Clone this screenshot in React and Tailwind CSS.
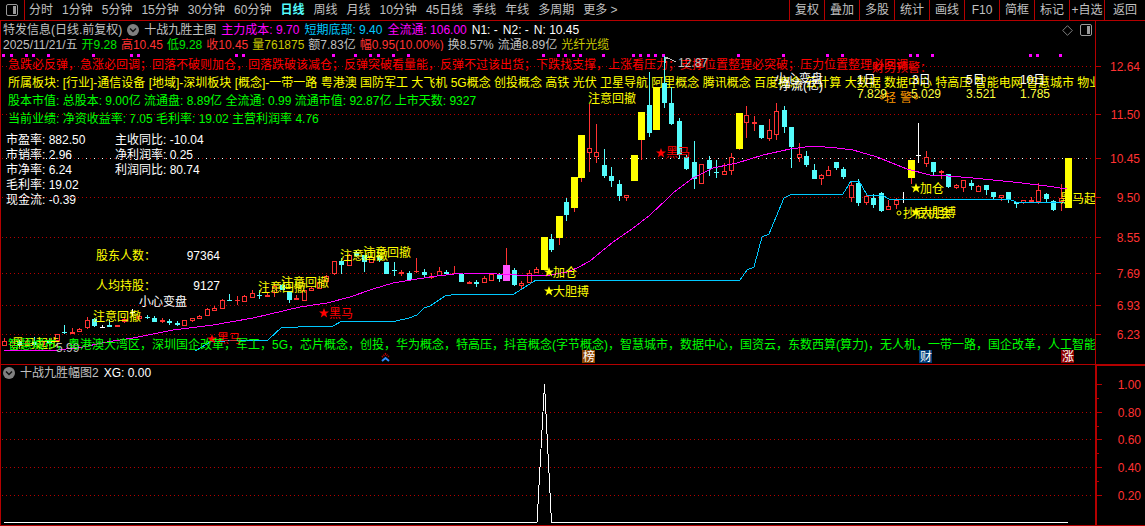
// src/App.jsx
import React, { useState } from 'react';

const periods = [
  '分时', '1分钟', '5分钟', '15分钟', '30分钟', '60分钟', '日线', '周线', '月线',
  '10分钟', '45日线', '季线', '年线', '多周期', '更多 >'
];

const actions = ['复权', '叠加', '多股', '统计', '画线', 'F10', '简框', '标记', '+自选', '返回'];

const quote = [
  { text: '2025/11/21/五', color: 'text-[#c0c0c0]' },
  { text: '开9.28', color: 'text-[#00e600]' },
  { text: '高10.45', color: 'text-[#ff3232]' },
  { text: '低9.28', color: 'text-[#00e600]' },
  { text: '收10.45', color: 'text-[#ff3232]' },
  { text: '量761875', color: 'text-[#c8c800]' },
  { text: '额7.83亿', color: 'text-[#c0c0c0]' },
  { text: '幅0.95(10.00%)', color: 'text-[#ff3232]' },
  { text: '换8.57%', color: 'text-[#c0c0c0]' },
  { text: '流通8.89亿', color: 'text-[#c0c0c0]' },
  { text: '光纤光缆', color: 'text-[#c8c800]' }
];

const indicators = [
  { text: '主力成本: 9.70', color: 'text-[#ff00ff]' },
  { text: '短期底部: 9.40', color: 'text-[#00c8ff]' },
  { text: '全流通: 106.00', color: 'text-[#ff00ff]' },
  { text: 'N1: -', color: 'text-white' },
  { text: 'N2: -', color: 'text-white' },
  { text: 'N: 10.45', color: 'text-white' }
];

const stats = [
  ['市盈率: 882.50', '主收同比: -10.04'],
  ['市销率: 2.96', '净利润率: 0.25'],
  ['市净率: 6.24', '利润同比: 80.74'],
  ['毛利率: 19.02', ''],
  ['现金流: -0.39', '']
];

const priceLevels = [
  [66, '12.64'], [114, '11.50'], [158, '10.45'], [197, '9.50'],
  [237, '8.55'], [273, '7.69'], [305, '6.93'], [334, '6.23']
];

const subLevels = [
  [384, '1.00'], [412, '0.80'], [439, '0.60'], [467, '0.40'], [495, '0.20']
];
const subTicks = [398, 426, 453, 481];

const signalDots = [
  2, 10, 25, 32, 47, 92, 130, 137, 235, 242, 332, 354, 369, 377, 392, 407, 542, 557,
  564, 572, 579, 602, 632, 639, 647, 654, 662, 737, 782, 826, 841, 909, 916, 931,
  1029, 1036, 1059
];

// [x, kind, high, low, body top, body bottom]
// kinds: r - up (hollow), c - down, y - limit up, m - marked, w - flat
const candles = [
  [4, 'r', 338, 346, 341, 346], [12, 'r', 340, 347, 342, 346], [19, 'c', 340, 347, 341, 345],
  [27, 'r', 339, 346, 341, 345], [34, 'c', 337, 346, 342, 345], [42, 'r', 340, 347, 341, 345],
  [49, 'c', 338, 345, 340, 343], [57, 'r', 334, 342, 334, 341], [64, 'c', 325, 334, 332, 333],
  [72, 'r', 328, 334, 332, 334], [79, 'r', 328, 332, 329, 332], [87, 'r', 317, 329, 320, 328],
  [94, 'c', 318, 327, 319, 326], [102, 'w', 325, 328, 327, 328], [109, 'c', 320, 327, 325, 327],
  [117, 'r', 325, 327, 325, 327], [124, 'r', 317, 323, 319, 322], [132, 'w', 309, 316, 312, 313],
  [139, 'r', 315, 319, 316, 319], [147, 'c', 315, 319, 317, 318], [154, 'c', 316, 322, 318, 322],
  [162, 'r', 318, 323, 320, 322], [169, 'c', 319, 325, 321, 323], [177, 'c', 321, 326, 323, 325],
  [184, 'r', 320, 326, 320, 326], [192, 'r', 318, 322, 318, 321], [199, 'r', 315, 319, 316, 319],
  [207, 'r', 308, 316, 309, 316], [214, 'r', 306, 311, 308, 311], [222, 'r', 299, 309, 300, 309],
  [229, 'c', 294, 301, 300, 301], [237, 'r', 296, 305, 300, 301], [244, 'r', 295, 302, 296, 302],
  [252, 'r', 290, 298, 293, 298], [259, 'c', 290, 299, 295, 296], [267, 'r', 293, 297, 295, 297],
  [274, 'r', 283, 297, 286, 293], [282, 'c', 284, 290, 285, 290], [289, 'c', 291, 303, 291, 300],
  [296, 'r', 295, 300, 298, 300], [304, 'r', 290, 301, 290, 301], [311, 'r', 287, 291, 288, 291],
  [319, 'r', 281, 289, 282, 289], [326, 'r', 275, 282, 276, 282], [334, 'r', 261, 275, 261, 274],
  [341, 'c', 258, 274, 261, 265], [349, 'r', 254, 266, 255, 266], [356, 'c', 251, 257, 252, 256],
  [364, 'c', 255, 272, 255, 262], [371, 'r', 256, 263, 257, 263], [379, 'c', 255, 262, 256, 260],
  [386, 'c', 262, 274, 262, 274], [394, 'c', 262, 276, 270, 271], [401, 'r', 270, 276, 272, 274],
  [409, 'c', 271, 280, 273, 280], [416, 'r', 258, 273, 271, 272], [424, 'c', 269, 277, 272, 275],
  [431, 'r', 273, 279, 276, 278], [439, 'r', 267, 276, 271, 276], [446, 'c', 270, 274, 272, 274],
  [454, 'r', 266, 274, 273, 274], [461, 'c', 274, 282, 274, 282], [469, 'r', 281, 284, 282, 284],
  [476, 'c', 280, 287, 282, 284], [484, 'r', 276, 283, 278, 283], [491, 'r', 274, 281, 274, 281],
  [499, 'c', 273, 282, 274, 279], [506, 'm', 248, 281, 265, 281], [514, 'c', 268, 286, 270, 285],
  [521, 'r', 281, 290, 283, 286], [529, 'r', 270, 283, 273, 283], [536, 'r', 267, 273, 269, 273],
  [544, 'y', 237, 270, 237, 270], [551, 'c', 234, 252, 239, 250], [559, 'y', 216, 245, 216, 238],
  [566, 'c', 198, 221, 202, 215], [574, 'y', 177, 212, 177, 208], [581, 'y', 135, 182, 135, 178],
  [589, 'r', 104, 172, 148, 153], [596, 'r', 124, 163, 152, 157], [604, 'c', 149, 178, 165, 176],
  [611, 'c', 167, 187, 176, 181], [619, 'c', 180, 201, 184, 196], [626, 'r', 195, 201, 195, 198],
  [634, 'y', 155, 181, 155, 181], [641, 'y', 112, 160, 112, 140], [649, 'c', 72, 137, 105, 133],
  [656, 'y', 87, 130, 87, 130], [664, 'c', 56, 108, 83, 103], [671, 'c', 87, 125, 103, 124],
  [679, 'c', 118, 159, 121, 155], [686, 'c', 155, 170, 157, 169], [694, 'c', 141, 189, 162, 179],
  [701, 'r', 164, 184, 164, 184], [709, 'c', 156, 176, 160, 169], [716, 'c', 160, 178, 172, 173],
  [724, 'r', 163, 175, 171, 175], [731, 'r', 153, 175, 157, 171], [739, 'y', 113, 150, 113, 149],
  [746, 'r', 106, 138, 115, 123], [754, 'r', 116, 131, 122, 124], [761, 'c', 125, 139, 125, 138],
  [769, 'r', 119, 141, 130, 139], [776, 'r', 103, 140, 111, 135], [784, 'c', 106, 133, 110, 127],
  [791, 'c', 127, 168, 127, 147], [799, 'r', 143, 162, 154, 158], [806, 'c', 151, 167, 156, 165],
  [814, 'c', 164, 179, 170, 179], [821, 'r', 174, 185, 175, 179], [828, 'r', 166, 176, 170, 176],
  [836, 'c', 162, 170, 162, 168], [843, 'c', 167, 179, 169, 177], [851, 'r', 182, 202, 185, 198],
  [858, 'c', 179, 206, 183, 203], [866, 'r', 194, 205, 196, 203], [873, 'c', 194, 208, 198, 205],
  [881, 'c', 192, 212, 193, 211], [888, 'r', 200, 210, 206, 210], [896, 'r', 198, 209, 200, 205],
  [903, 'w', 192, 203, 199, 200], [911, 'y', 160, 184, 160, 178], [918, 'w', 123, 163, 155, 156],
  [926, 'r', 151, 167, 157, 164], [933, 'c', 162, 175, 162, 172], [941, 'r', 170, 179, 171, 173],
  [948, 'c', 174, 188, 174, 187], [956, 'r', 184, 189, 185, 188], [963, 'r', 180, 192, 180, 188],
  [971, 'c', 180, 190, 183, 186], [978, 'r', 185, 192, 186, 192], [986, 'c', 185, 195, 185, 190],
  [993, 'c', 192, 199, 192, 197], [1001, 'r', 195, 201, 195, 198], [1008, 'c', 192, 203, 192, 200],
  [1016, 'c', 202, 208, 202, 204], [1023, 'r', 200, 204, 200, 203], [1031, 'r', 197, 202, 200, 202],
  [1038, 'r', 183, 204, 190, 202], [1046, 'c', 193, 202, 194, 199], [1053, 'c', 200, 211, 201, 210],
  [1061, 'r', 184, 211, 198, 202], [1068, 'y', 158, 208, 158, 208]
];

const costLine =
  '4,351 30,350 50,351 83,347 107,342 133,338 173,330 213,325 253,318 300,307 327,303 350,297 373,289 393,283 417,279 437,276 463,273 497,274 517,275 550,275 567,272 577,268 590,261 613,242 632,229 650,215 667,199 673,193 693,178 713,168 737,163 763,155 790,149 813,146 837,148 853,150 877,157 907,169 930,175 948,176 973,178 1013,182 1047,186 1067,189';

const bottomLine =
  '195,351 202,347 210,342 240,340 268,340 282,327 298,327 302,326 333,326 342,321 396,321 409,318 417,315 424,308 430,306 445,296 458,294 514,294 536,280 740,280 747,270 754,267 762,237 769,234 784,198 792,194 843,194 851,181 859,181 867,195 882,195 889,199 1009,199 1016,202 1065,202';

// [x, baseline, text, fill class]
const notes = [
  [93, 321, '注意回撤', 'fill-[#ffff00]'],
  [258, 292, '注意回撤', 'fill-[#ffff00]'],
  [281, 287, '注意回撤', 'fill-[#ffff00]'],
  [340, 260, '注意回撤', 'fill-[#ffff00]'],
  [363, 257, '注意回撤', 'fill-[#ffff00]'],
  [588, 103, '注意回撤', 'fill-[#ffff00]'],
  [139, 306, '小心变盘', 'fill-white'],
  [775, 83, '小心变盘', 'fill-white'],
  [779, 90, '净流(亿)', 'fill-white'],
  [12, 348, '黑马起步', 'fill-[#ffff00]'],
  [56, 352, '5.99', 'fill-[#c0c0c0]'],
  [678, 67, '12.87', 'fill-[#c0c0c0]'],
  [217, 343, '黑马', 'fill-[#ff0000]'],
  [329, 318, '黑马', 'fill-[#ff0000]'],
  [666, 157, '黑马', 'fill-[#ff0000]'],
  [553, 277, '加仓', 'fill-[#ffff00]'],
  [553, 296, '大胆搏', 'fill-[#ffff00]'],
  [920, 193, '加仓', 'fill-[#ffff00]'],
  [903, 218, '抄底机会', 'fill-[#ffff00]'],
  [920, 217, '大胆搏', 'fill-[#ffff00]'],
  [1060, 203, '黑马起步', 'fill-[#ffff00]'],
  [872, 72, '财务预警：', 'fill-[#ff0000]'],
  [884, 102, '轻', 'fill-[#ff9900]'],
  [900, 102, '警', 'fill-[#ff9900]'],
  [857, 84, '1日', 'fill-white'],
  [912, 84, '3日', 'fill-white'],
  [966, 84, '5日', 'fill-white'],
  [1020, 84, '10日', 'fill-white'],
  [857, 98, '7.829', 'fill-[#ffff40]'],
  [911, 98, '5.029', 'fill-[#ffff40]'],
  [966, 98, '3.521', 'fill-[#ffff40]'],
  [1020, 98, '1.785', 'fill-[#ffff40]']
];

const stars = [
  [212, 339, 'fill-[#ff0000]'],
  [324, 313, 'fill-[#ff0000]'],
  [661, 153, 'fill-[#ff0000]'],
  [549, 272, 'fill-[#ffff00]'],
  [549, 291, 'fill-[#ffff00]'],
  [916, 188, 'fill-[#ffff00]'],
  [916, 212, 'fill-[#ffff00]']
];

const rings = [
  [899, 213, 'stroke-[#ffff00]'],
  [882, 97, 'stroke-[#ff9900]'],
  [916, 97, 'stroke-[#ff9900]']
];

const badges = [
  [582, '榜', 'fill-[#8a4400]'],
  [919, '财', 'fill-[#003c78]'],
  [1061, '涨', 'fill-[#8c0000]']
];

const bodyColors = { c: '#54fcfc', y: '#ffff00', m: '#ff54ff', w: '#ffffff', r: '#ff3232' };
const wickColors = { c: '#54fcfc', y: '#ff3232', m: '#ff3232', w: '#ffffff', r: '#ff3232' };

const Candle = ({ data }) => {
  const [x, kind, high, low, top, bottom] = data;
  const half = kind === 'y' || kind === 'm' ? 3 : 2;
  const hollow = kind === 'r' && bottom - top > 2;
  return (
    <g>
      <rect x={x} y={high} width="1" height={low - high} fill={wickColors[kind]} />
      {hollow ? (
        <rect x={x - 1.5} y={top + 0.5} width="4" height={bottom - top - 1} fill="#000" stroke={bodyColors[kind]} />
      ) : (
        <rect x={x - half} y={top} width={half * 2 + 1} height={bottom - top} fill={bodyColors[kind]} />
      )}
    </g>
  );
};

const GridLine = ({ y }) => (
  <line x1="2" x2="100%" y1={y + 0.5} y2={y + 0.5} stroke="#b40000" strokeDasharray="1 3" />
);

const PanelIcon = () => (
  <svg width="12" height="12" viewBox="0 0 12 12" aria-hidden="true">
    <rect x="0.5" y="0.5" width="11" height="11" rx="1.5" fill="none" stroke="#9a9a9a" />
    <rect x="7" y="2" width="3" height="8" fill="#9a9a9a" />
  </svg>
);

const Chevron = () => (
  <svg width="12" height="12" viewBox="0 0 12 12" aria-hidden="true">
    <circle cx="6" cy="6" r="6" fill="#808080" />
    <path d="M3 4.5 L6 7.5 L9 4.5" fill="none" stroke="#101010" strokeWidth="1.5" />
  </svg>
);

const Toolbar = ({ period, onSelect }) => (
  <nav className="flex h-[21px] border-b border-[#b40000] text-[#c0c0c0]">
    <button type="button" aria-label="侧栏" className="flex w-[25px] shrink-0 items-center border-r border-[#b40000] pl-[6px]">
      <PanelIcon />
    </button>
    <div className="flex min-w-0 flex-1 gap-[9px] overflow-hidden pl-1">
      {periods.map(p => (
        <button
          key={p}
          type="button"
          onClick={() => onSelect(p)}
          className={p === period ? 'shrink-0 font-bold text-[#54fcfc]' : 'shrink-0'}
        >
          {p}
        </button>
      ))}
    </div>
    <div className="flex shrink-0">
      {actions.map(a => (
        <button key={a} type="button" className="w-[35px] border-l border-[#b40000] text-center last:w-[41px]">
          {a}
        </button>
      ))}
    </div>
  </nav>
);

const MainHeader = () => (
  <header className="h-[30px] overflow-hidden pl-[2px] whitespace-nowrap">
    <div className="flex h-[18px] items-center gap-[5px] text-[#c0c0c0]">
      <span>特发信息(日线.前复权)</span>
      <button type="button" aria-label="主图指标"><Chevron /></button>
      <span>十战九胜主图</span>
      {indicators.map(i => (
        <span key={i.text} className={i.color}>{i.text}</span>
      ))}
      <span className="ml-auto flex items-center gap-[7px] pr-[3px]">
        <svg width="11" height="11" viewBox="0 0 11 11" aria-hidden="true">
          <path d="M5.5 0.7 L10.3 5.5 L5.5 10.3 L0.7 5.5 Z" fill="none" stroke="#808080" />
        </svg>
        <PanelIcon />
      </span>
    </div>
    <div className="flex h-3 items-center gap-1 leading-3">
      {quote.map(q => (
        <span key={q.text} className={q.color}>{q.text}</span>
      ))}
    </div>
  </header>
);

const MainTexts = () => (
  <div className="absolute inset-0 overflow-hidden pt-[5px] leading-[18px] whitespace-nowrap">
    <div className="pl-[7px]">
      <p className="text-[#ff0000]">
        急跌必反弹，急涨必回调；回落不破则加仓，回落跌破该减仓；反弹突破看量能，反弹不过该出货；下跌找支撑，上涨看压力；支撑位置整理必突破；压力位置整理必回调。
      </p>
      <p className="text-[#ffff00]">
        所属板块: [行业]-通信设备 [地域]-深圳板块 [概念]-一带一路 粤港澳 国防军工 大飞机 5G概念 创投概念 高铁 光伏 卫星导航 阿里概念 腾讯概念 百度概念 云计算 大数据 数据中心 特高压 智能电网 智慧城市 物业管理
      </p>
      <p className="text-[#00ff00]">
        股本市值: 总股本: 9.00亿 流通盘: 8.89亿 全流通: 0.99 流通市值: 92.87亿 上市天数: 9327
      </p>
      <p className="text-[#00ff00]">当前业绩: 净资收益率: 7.05 毛利率: 19.02 主营利润率 4.76</p>
    </div>
    <div className="mt-[5px] grid grid-cols-[109px_auto] justify-start pl-[5px] leading-[15px] text-white">
      {stats.map(([a, b]) => (
        <React.Fragment key={a}>
          <span>{a}</span>
          <span>{b}</span>
        </React.Fragment>
      ))}
    </div>
    <dl className="mt-[33px] ml-[95px] grid w-[124px] grid-cols-[auto_1fr] leading-[30px]">
      <dt className="text-[#ffff00]">股东人数：</dt>
      <dd className="text-right text-white">97364</dd>
      <dt className="text-[#ffff00]">人均持股：</dt>
      <dd className="text-right text-white">9127</dd>
    </dl>
  </div>
);

// concept ticker, runs over the candles
const Ticker = () => (
  <p className="absolute inset-x-0 bottom-[10px] overflow-hidden pl-[7px] leading-[18px] whitespace-nowrap text-[#00ff00]">
    智慧城市，粤港澳大湾区，深圳国企改革，军工，5G，芯片概念，创投，华为概念，特高压，抖音概念(字节概念)，智慧城市，数据中心，国资云，东数西算(算力)，无人机，一带一路，国企改革，人工智能
  </p>
);

const MainChart = () => (
  <svg className="relative block h-[313px] w-full" role="img" aria-label="日线图">
    <g transform="translate(-1 -51)">
      <g shapeRendering="crispEdges">
        {priceLevels.map(([y]) => <GridLine key={y} y={y} />)}
        <line x1="6" x2="100%" y1="158.5" y2="158.5" stroke="#fff" strokeDasharray="1 7" />
        {signalDots.map(x => <rect key={x} x={x} y="54" width="3" height="3" fill="#ff00ff" />)}
        {candles.map(c => <Candle key={c[0]} data={c} />)}
        <polyline points={costLine} fill="none" stroke="#ff00ff" />
        <polyline points={bottomLine} fill="none" stroke="#00c8ff" />
        <path d="M665 63 V57 H668 M665 58 L670 59 L676 62" fill="none" stroke="#c0c0c0" />
      </g>
      {notes.map(([x, y, text, fill]) => (
        <text key={`${x}-${y}`} x={x} y={y} className={fill}>{text}</text>
      ))}
      {stars.map(([x, y, fill]) => (
        <path
          key={`${x}-${y}`}
          transform={`translate(${x} ${y})`}
          d="M0 -5 L1.3 -1.5 H5 L2.1 0.8 L3.2 4.5 L0 2.3 L-3.2 4.5 L-2.1 0.8 L-5 -1.5 H-1.3 Z"
          className={fill}
        />
      ))}
      {rings.map(([x, y, stroke]) => (
        <circle key={x} cx={x} cy={y} r="2" fill="none" className={stroke} />
      ))}
      <path d="M382 357 L385.5 354 L389 357" fill="none" stroke="#c00000" strokeWidth="2" strokeDasharray="1 1" />
      <path d="M382 361 L385.5 358 L389 361" fill="none" stroke="#2c8cff" strokeWidth="2" />
      {badges.map(([x, text, fill]) => (
        <g key={x}>
          <rect x={x} y="350" width="13" height="13" className={fill} />
          <text x={x + 1} y="361" className="fill-white">{text}</text>
        </g>
      ))}
    </g>
  </svg>
);

const Axis = ({ levels, ticks = [], offset, className }) => (
  <svg className={className} aria-hidden="true">
    <g transform={`translate(0 ${-offset})`} shapeRendering="crispEdges">
      {levels.map(([y, label]) => (
        <g key={label}>
          <line x1="0" x2="5" y1={y + 0.5} y2={y + 0.5} stroke="#b40000" />
          <text x="44" y={y + 5} textAnchor="end" className="fill-[#ff3232]">{label}</text>
        </g>
      ))}
      {ticks.map(y => <line key={y} x1="0" x2="2" y1={y + 0.5} y2={y + 0.5} stroke="#b40000" />)}
    </g>
  </svg>
);

const SubChart = () => (
  <svg className="block h-[144px] w-full" role="img" aria-label="十战九胜幅图2">
    <g transform="translate(-1 -381)" shapeRendering="crispEdges">
      {subLevels.slice(1).map(([y]) => <GridLine key={y} y={y} />)}
      <polyline
        points="4,522.5 537,522.5 544.5,384 551.5,522.5 1068,522.5"
        fill="none"
        stroke="#fff"
      />
    </g>
  </svg>
);

const App = () => {
  const [period, setPeriod] = useState('日线');

  return (
    <div className="overflow-hidden bg-black font-['Liberation_Sans','Noto_Sans_CJK_SC',sans-serif] text-[12px] leading-4">
      <Toolbar period={period} onSelect={setPeriod} />

      <section className="flex border-b border-l border-[#b40000]">
        <div className="min-w-0 flex-1">
          <MainHeader />
          <div className="relative overflow-hidden">
            <MainTexts />
            <MainChart />
            <Ticker />
          </div>
        </div>
        <div className="w-[50px] shrink-0 border-l border-[#b40000]">
          <Axis levels={priceLevels} offset={21} className="block h-[343px] w-full" />
        </div>
      </section>

      <section className="flex border-b border-l border-[#b40000]">
        <div className="min-w-0 flex-1">
          <header className="flex h-4 items-center gap-[5px] pl-[2px] text-[#c0c0c0]">
            <button type="button" aria-label="副图指标"><Chevron /></button>
            <span>十战九胜幅图2</span>
            <span className="text-white">XG: 0.00</span>
          </header>
          <SubChart />
        </div>
        <div className="w-[50px] shrink-0 border-t border-l-2 border-[#b40000]">
          <Axis levels={subLevels} ticks={subTicks} offset={366} className="block h-[159px] w-full" />
        </div>
      </section>
    </div>
  );
};

export default App;
